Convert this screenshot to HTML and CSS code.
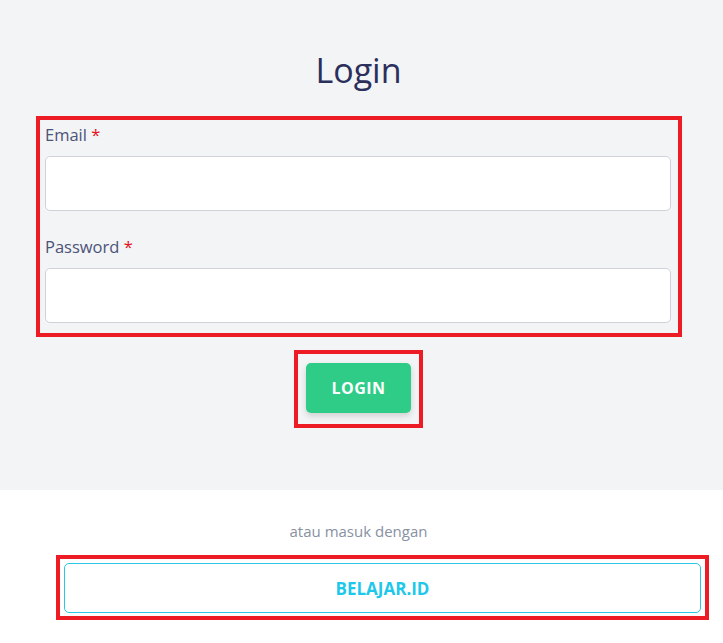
FILE: index.html
```html
<!DOCTYPE html>
<html lang="id">
<head>
    <meta charset="UTF-8">
    <meta name="viewport" content="width=device-width, initial-scale=1.0">
    <title>Login</title>
    <link rel="stylesheet" href="styles.css">
</head>
<body>
    <div class="top">
        <h1 class="title">Login</h1>
        <form class="mark form-box">
            <label class="field-label">Email <span class="req">*</span></label>
            <input type="email" class="field">
            <label class="field-label second">Password <span class="req">*</span></label>
            <input type="password" class="field">
        </form>
        <div class="mark btn-box">
            <button class="btn-login">LOGIN</button>
        </div>
    </div>
    <div class="bottom">
        <p class="alt-text">atau masuk dengan</p>
        <div class="mark sso-box">
            <button class="btn-sso">BELAJAR.ID</button>
        </div>
    </div>
</body>
</html>
```

FILE: styles.css
```css
body {
    margin: 0;
    font-family: "Open Sans", "Noto Sans", sans-serif;
    background: #ffffff;
}
.top {
    background-color: #f3f4f6;
    height: 490px;
    padding-top: 48px;
    box-sizing: border-box;
}
.title {
    margin: 0;
    padding-right: 6px;
    text-align: center;
    font-size: 34px;
    font-weight: 400;
    line-height: 44px;
    color: #2b2f5c;
}
.mark {
    border: 4px solid #ed1c24;
    box-sizing: border-box;
}
.form-box {
    width: 646px;
    margin: 24px 0 0 36px;
    padding: 3px 7px 10px 5px;
    display: flex;
    flex-direction: column;
}
.field-label {
    font-size: 16.5px;
    line-height: 24px;
    color: #4b5378;
    margin-bottom: 9px;
}
.field-label.second {
    margin-top: 24px;
}
.req {
    color: #e3101a;
}
.field {
    height: 55px;
    border: 1px solid #cfd3d9;
    border-radius: 5px;
    background: #ffffff;
    box-sizing: border-box;
    font-size: 16px;
    padding: 0 12px;
}
.btn-box {
    width: 129px;
    height: 78px;
    margin: 13px auto 0 294px;
    padding: 9px 8px 0 8px;
}
.btn-login {
    width: 105px;
    height: 50px;
    border: none;
    border-radius: 5px;
    background-color: #2ecc87;
    color: #ffffff;
    font-family: inherit;
    font-size: 16px;
    font-weight: 700;
    letter-spacing: 0.5px;
    box-shadow: 0 3px 6px rgba(0, 0, 0, 0.15);
}
.bottom {
    padding-top: 30px;
}
.alt-text {
    margin: 0;
    padding-right: 6px;
    text-align: center;
    font-size: 15px;
    line-height: 22px;
    color: #8891a3;
}
.sso-box {
    width: 653px;
    height: 65px;
    margin: 13px 0 0 56px;
    padding: 4px;
}
.btn-sso {
    width: 100%;
    height: 50px;
    border: 1px solid #2cc7e3;
    border-radius: 5px;
    background: #ffffff;
    color: #1ec8ea;
    font-family: inherit;
    font-size: 17px;
    font-weight: 700;
}
```
